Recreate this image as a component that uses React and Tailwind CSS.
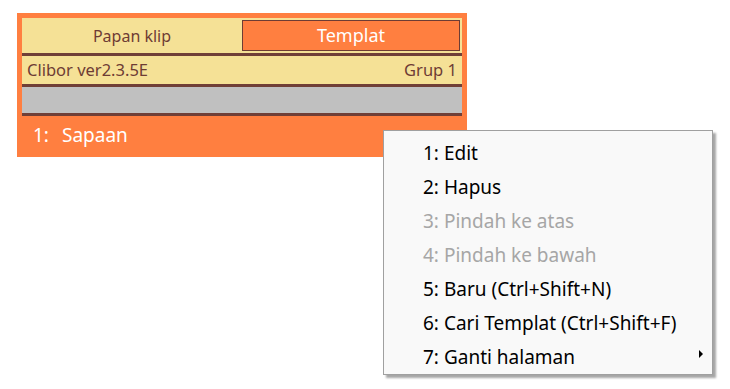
const menuItems = [
  { label: "1: Edit" },
  { label: "2: Hapus" },
  { label: "3: Pindah ke atas", disabled: true },
  { label: "4: Pindah ke bawah", disabled: true },
  { label: "5: Baru (Ctrl+Shift+N)" },
  { label: "6: Cari Templat (Ctrl+Shift+F)" },
  { label: "7: Ganti halaman", submenu: true },
];

function ContextMenu() {
  return (
    <div className="absolute left-[383px] top-[130px] w-[330px] border border-[#a0a0a0] bg-[#f9f9f9] pt-[5px] shadow-[3px_3px_2px_rgba(0,0,0,0.35)]">
      {menuItems.map((item) => (
        <div key={item.label} className="relative flex h-[34px] items-center pl-[39px]">
          <span className={`text-[19px] leading-none ${item.disabled ? "text-[#a6a6a6]" : "text-black"}`}>{item.label}</span>
          {item.submenu && (
            <span className="absolute right-[9px] top-[10px] h-0 w-0 border-y-[4px] border-l-[4px] border-y-transparent border-l-black" />
          )}
        </div>
      ))}
    </div>
  );
}

export default function App() {
  return (
    <div className="relative h-[389px] w-[730px] bg-white font-['Noto_Sans',sans-serif]">
      <div className="absolute left-[17px] top-[13px] w-[450px] bg-[#ff7f40] px-[5px] pt-[5px]">
        <div className="flex h-[35px] items-center bg-[#f5e196] pr-[2px]">
          <div className="flex w-[220px] justify-center text-[16px] text-[#6e3c34]">Papan klip</div>
          <div className="flex h-[31px] flex-1 items-center justify-center border border-[#6e3c34] bg-[#ff7f40] text-[18px] text-white">
            Templat
          </div>
        </div>
        <div className="h-[3px] bg-[#703f37]" />
        <div className="flex h-[28px] items-center justify-between bg-[#f5e196] px-[5px] text-[16.5px] text-[#6e3c34]">
          <span>Clibor ver2.3.5E</span>
          <span>Grup 1</span>
        </div>
        <div className="h-[3px] bg-[#703f37]" />
        <div className="h-[26px] bg-[#c0c0c0]" />
        <div className="h-[3px] bg-[#703f37]" />
        <div className="flex h-[41px] items-center pb-[2px] pl-[11px] text-[19px] text-white">
          <span className="w-[29px]">1:</span>
          <span>Sapaan</span>
        </div>
      </div>
      <ContextMenu />
    </div>
  );
}
